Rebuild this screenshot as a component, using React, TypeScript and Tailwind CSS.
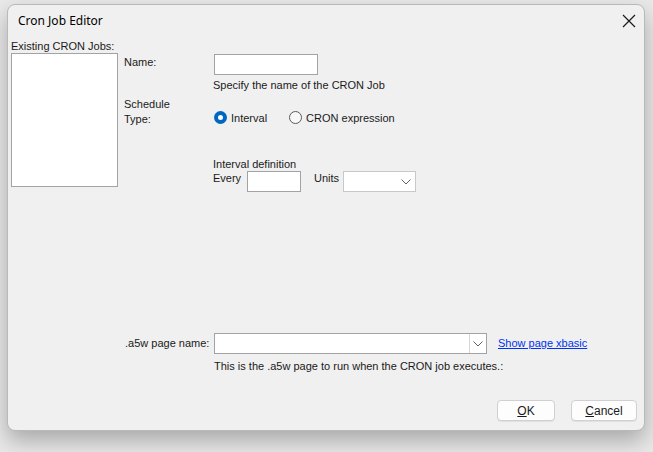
const font = { fontFamily: '"Liberation Sans", Arial, sans-serif' }

function Chevron() {
  return (
    <svg width="10" height="6" viewBox="0 0 10 6" className="text-[#606060]">
      <path d="M0.5 0.5 L5 5 L9.5 0.5" fill="none" stroke="currentColor" strokeWidth="1" />
    </svg>
  )
}

function CloseIcon() {
  return (
    <svg width="14" height="14" viewBox="0 0 14 14" className="text-[#1a1a1a]">
      <path d="M1 1 L13 13 M13 1 L1 13" fill="none" stroke="currentColor" strokeWidth="1.2" />
    </svg>
  )
}

function Radio({ checked, label }: { checked: boolean; label: string }) {
  return (
    <label className="flex items-center gap-[4px]">
      {checked ? (
        <span className="w-[13px] h-[13px] rounded-full bg-[#0067c0] flex items-center justify-center">
          <span className="w-[5px] h-[5px] rounded-full bg-white" />
        </span>
      ) : (
        <span className="w-[13px] h-[13px] rounded-full border border-[#5a5a5a] bg-[#f8f8f8]" />
      )}
      <span>{label}</span>
    </label>
  )
}

function Button({ children, className }: { children: React.ReactNode; className?: string }) {
  return (
    <button
      className={`h-[21px] rounded-[4px] border border-[#d0d0d0] bg-[#fdfdfd] text-[12px] text-[#1a1a1a] shadow-[0_1px_0_rgba(0,0,0,0.06)] ${className}`}
    >
      {children}
    </button>
  )
}

export default function App() {
  return (
    <div className="w-[653px] h-[452px] bg-[#e9e9e9] pl-[7px] pt-[4px] overflow-hidden" style={font}>
      {/* Dialog window */}
      <div className="w-[638px] h-[427px] bg-[#f0f0f0] border border-[#b9b9b9] rounded-[8px] shadow-[0_10px_22px_rgba(0,0,0,0.28)] flex flex-col text-[11px] text-[#1a1a1a]">
        {/* Title bar */}
        <div className="h-[31px] flex items-center justify-between pl-[10px] pr-[8px]">
          <span className="text-[12px] text-black" style={{ fontFamily: '"Noto Sans", "Liberation Sans", sans-serif' }}>
            Cron Job Editor
          </span>
          <CloseIcon />
        </div>

        {/* Body */}
        <div className="flex pl-[3px] pt-[3px]">
          {/* Existing jobs list */}
          <div className="w-[107px] flex flex-col">
            <span className="leading-[14px]">Existing CRON Jobs:</span>
            <div className="h-[134px] bg-white border border-[#a3a3a3]" />
          </div>

          {/* Form */}
          <div className="ml-[6px] flex flex-col">
            <div className="flex mt-[15px]">
              <span className="w-[90px] pt-[1px] leading-[14px]">Name:</span>
              <input className="w-[104px] h-[21px] bg-white border border-[#a3a3a3] outline-none" />
            </div>
            <span className="ml-[89px] mt-[3px] leading-[14px]">Specify the name of the CRON Job</span>

            <div className="flex mt-[5px]">
              <span className="w-[90px] leading-[15px]">
                Schedule
                <br />
                Type:
              </span>
              <div className="flex items-end gap-[22px] pb-[1px]">
                <Radio checked label="Interval" />
                <Radio checked={false} label="CRON expression" />
              </div>
            </div>

            <div className="ml-[89px] mt-[30px] flex flex-col">
              <span className="leading-[14px]">Interval definition</span>
              <div className="flex items-start">
                <span className="w-[34px] leading-[14px]">Every</span>
                <input className="w-[54px] h-[21px] bg-white border border-[#a3a3a3] outline-none" />
                <span className="ml-[13px] w-[29px] leading-[14px]">Units</span>
                <div className="w-[73px] h-[21px] bg-white border border-[#c8c8c8] flex items-center justify-end pr-[4px]">
                  <Chevron />
                </div>
              </div>
            </div>
          </div>
        </div>

        {/* Page name */}
        <div className="flex mt-[141px] pl-[117px]">
          <span className="w-[89px] pt-[3px] leading-[14px]">.a5w page name:</span>
          <div className="flex flex-col">
            <div className="flex items-start">
              <div className="w-[273px] h-[21px] bg-white border border-[#a3a3a3] flex justify-end">
                <div className="w-[17px] h-full border-l border-[#d8d8d8] flex items-center justify-center">
                  <Chevron />
                </div>
              </div>
              <a className="ml-[11px] pt-[3px] leading-[14px] text-[#0033ee] underline">Show page xbasic</a>
            </div>
            <span className="mt-[5px] leading-[14px]">This is the .a5w page to run when the CRON job executes.:</span>
          </div>
        </div>

        {/* Buttons */}
        <div className="mt-auto mb-[9px] flex justify-end gap-[16px] pr-[7px]">
          <Button className="w-[58px]">
            <span className="underline">O</span>K
          </Button>
          <Button className="w-[66px]">
            <span className="underline">C</span>ancel
          </Button>
        </div>
      </div>
    </div>
  )
}
